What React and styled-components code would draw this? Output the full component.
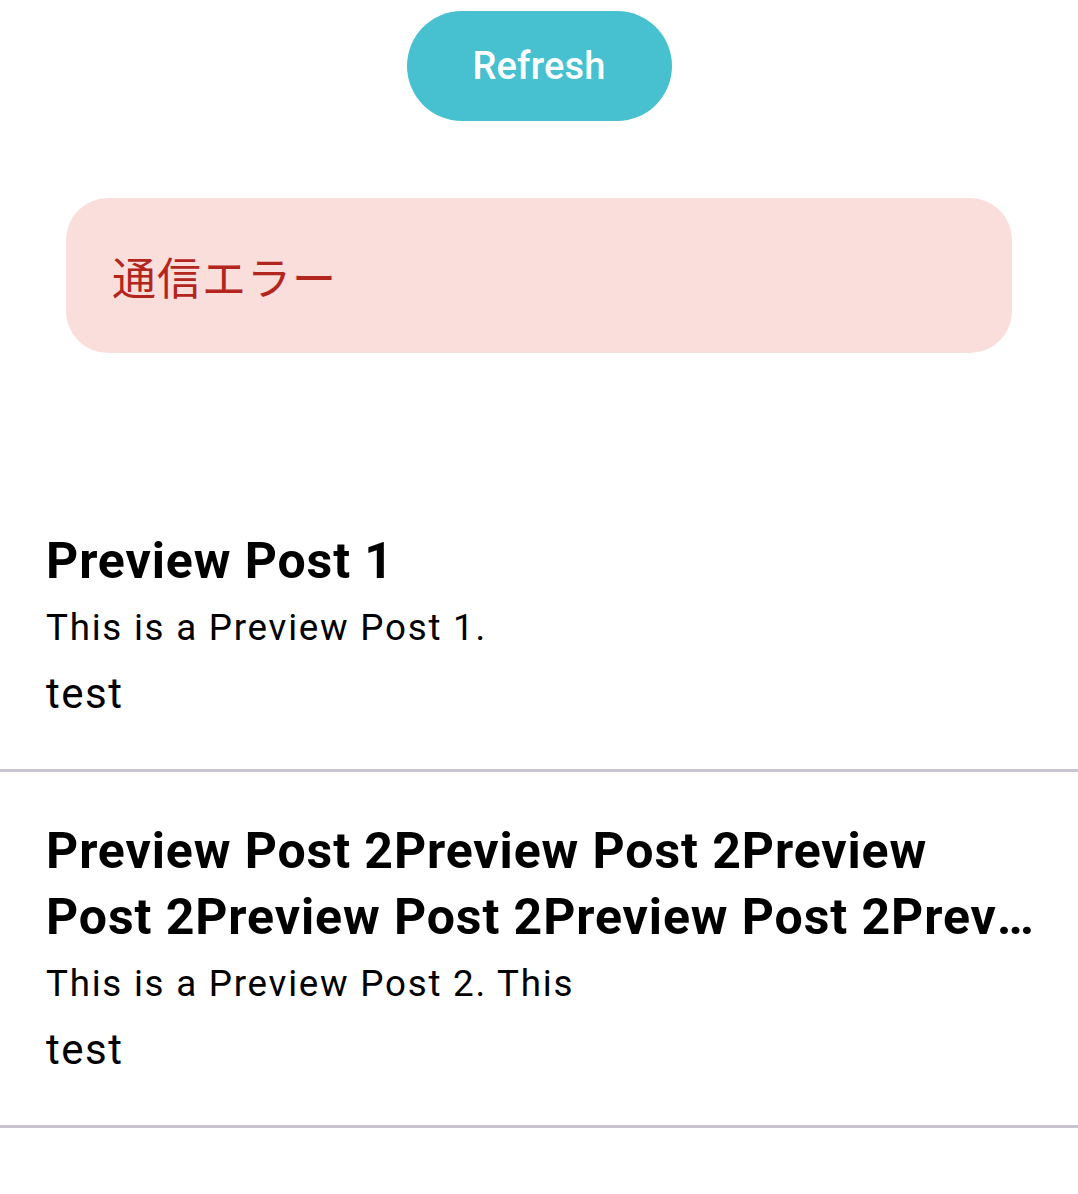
import React from "react";
import styled, { createGlobalStyle } from "styled-components";

const GlobalStyle = createGlobalStyle`
  body {
    margin: 0;
    background: #ffffff;
    font-family: Roboto, "Noto Sans CJK JP", sans-serif;
  }
`;

const Screen = styled.main`
  display: flex;
  flex-direction: column;
  width: 1078px;
`;

const Top = styled.div`
  display: flex;
  justify-content: center;
  padding-top: 11px;
`;

const RefreshButton = styled.button`
  width: 265px;
  height: 110px;
  border: none;
  border-radius: 55px;
  background: #47c1cf;
  color: #ffffff;
  font-family: Roboto, sans-serif;
  font-weight: 500;
  font-size: 38px;
  letter-spacing: 0.2px;
  cursor: pointer;
`;

const ErrorCard = styled.div`
  margin: 77px 66px 0;
  height: 155px;
  border-radius: 42px;
  background: #f9dedc;
  display: flex;
  align-items: center;
  padding-left: 46px;
  color: #b3261e;
  font-family: "Noto Sans CJK JP", sans-serif;
  font-size: 44px;
  letter-spacing: 1px;
  box-sizing: border-box;
`;

const PostList = styled.ul`
  list-style: none;
  margin: 129px 0 0;
  padding: 0;
`;

const PostItem = styled.li`
  padding: 46px 38px 44px 46px;
  border-bottom: 3px solid #cac4d0;
  display: flex;
  flex-direction: column;
  gap: 8px;
`;

// ellipsis like Compose: the last line is cut at a character, not a word
const Title = styled.h2`
  margin: 0;
  font-family: Roboto, sans-serif;
  font-weight: 700;
  font-size: 50px;
  line-height: 66px;
  letter-spacing: 0.9px;
  color: #000;
  overflow-wrap: anywhere;
  display: -webkit-box;
  -webkit-line-clamp: 2;
  -webkit-box-orient: vertical;
  overflow: hidden;
`;

const Body = styled.p`
  margin: 0;
  font-family: Roboto, sans-serif;
  font-size: 36.75px;
  line-height: 52px;
  letter-spacing: 1.75px;
  color: #000;
  white-space: nowrap;
`;

const Tag = styled.span`
  font-family: Roboto, sans-serif;
  font-size: 42px;
  line-height: 63px;
  letter-spacing: 1.5px;
  color: #000;
`;

const keepTogether = (s) => s.replace(/ /g, "\u00a0");

const posts = [
  {
    id: 1,
    title: "Preview Post 1",
    body: "This is a Preview Post 1.",
    tag: "test",
  },
  {
    id: 2,
    title: "Preview Post 2Preview Post 2Preview " + keepTogether("Post 2" + "Preview Post 2".repeat(4)),
    body: "This is a Preview Post 2. This",
    tag: "test",
  },
];

export default function App() {
  return (
    <>
      <GlobalStyle />
      <Screen>
        <Top>
          <RefreshButton>Refresh</RefreshButton>
        </Top>
        <ErrorCard>通信エラー</ErrorCard>
        <PostList>
          {posts.map((post) => (
            <PostItem key={post.id}>
              <Title>{post.title}</Title>
              <Body>{post.body}</Body>
              <Tag>{post.tag}</Tag>
            </PostItem>
          ))}
        </PostList>
      </Screen>
    </>
  );
}
